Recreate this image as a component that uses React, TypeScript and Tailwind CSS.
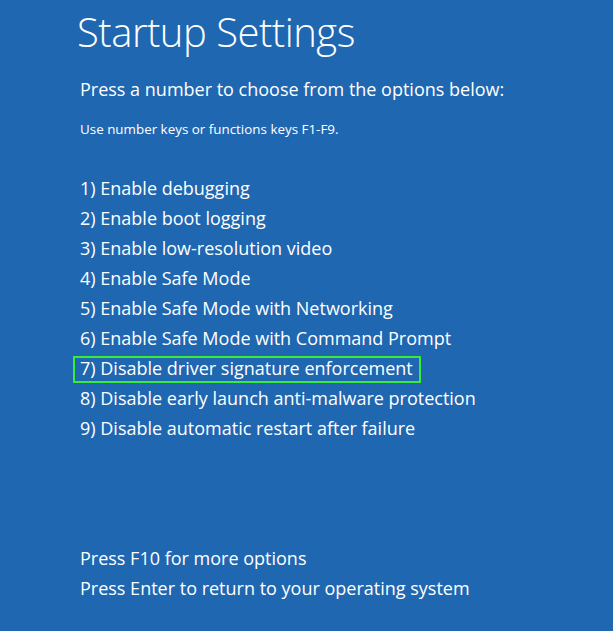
import React from "react";

const options = [
  "1) Enable debugging",
  "2) Enable boot logging",
  "3) Enable low-resolution video",
  "4) Enable Safe Mode",
  "5) Enable Safe Mode with Networking",
  "6) Enable Safe Mode with Command Prompt",
  "7) Disable driver signature enforcement",
  "8) Disable early launch anti-malware protection",
  "9) Disable automatic restart after failure",
];

export default function App() {
  return (
    <div
      className="w-[613px] h-[631px] bg-[#2067b2] text-white overflow-hidden"
      style={{ fontFamily: '"Open Sans", "Noto Sans", sans-serif' }}
    >
      <div className="pl-[80px] pt-[6px]">
        <h1 className="text-[40px] font-light leading-[52px] -ml-[3px] tracking-[-0.5px]">Startup Settings</h1>
        <p className="mt-[19px] text-[18px] leading-[24px]">Press a number to choose from the options below:</p>
        <p className="mt-[20px] text-[13.4px] leading-[16px]">Use number keys or functions keys F1-F9.</p>
        <ul className="mt-[36px] flex flex-col">
          {options.map((o, i) => (
            <li key={i} className="text-[18px] leading-[30px] relative">
              {i === 6 && (
                <span className="absolute left-[-7px] top-[3px] w-[348px] h-[27px] border-2 border-[#3aea3a]" />
              )}
              {o}
            </li>
          ))}
        </ul>
        <p className="mt-[100px] text-[18px] leading-[30px]">Press F10 for more options</p>
        <p className="text-[18px] leading-[30px]">Press Enter to return to your operating system</p>
      </div>
    </div>
  );
}
